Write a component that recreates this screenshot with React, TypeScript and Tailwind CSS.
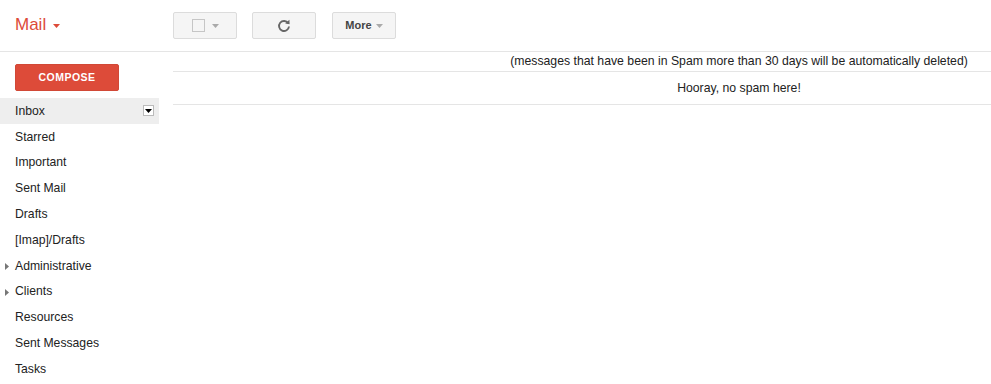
import React from "react";

const labels: { name: string; arrow?: boolean }[] = [
  { name: "Starred" },
  { name: "Important" },
  { name: "Sent Mail" },
  { name: "Drafts" },
  { name: "[Imap]/Drafts" },
  { name: "Administrative", arrow: true },
  { name: "Clients", arrow: true },
  { name: "Resources" },
  { name: "Sent Messages" },
  { name: "Tasks" },
];

function Caret({ color = "#999" }: { color?: string }) {
  return (
    <svg width="7" height="4" viewBox="0 0 7 4" className="shrink-0">
      <path d="M0 0h7L3.5 4z" fill={color} />
    </svg>
  );
}

export default function App() {
  return (
    <div
      className="h-[384px] w-[991px] overflow-hidden bg-white text-[12.2px] text-[#222]"
      style={{ fontFamily: '"Liberation Sans", Arial, sans-serif' }}
    >
      {/* top bar */}
      <div className="flex h-[52px] items-start border-b border-[#e5e5e5]">
        <div className="flex h-[50px] w-[173px] items-center pl-[15px] text-[17px] text-[#dd4b39]">
          <span>Mail</span>
          <span className="ml-[7px] mt-[1px]">
            <Caret color="#dd4b39" />
          </span>
        </div>
        <div className="mt-[12px] flex">
          <button className="flex h-[27px] w-[64px] items-center justify-center gap-[7px] rounded-[2px] border border-[#dcdcdc] bg-[#f5f5f5]">
            <span className="h-[13px] w-[13px] border border-[#c6c6c6] bg-[#f5f5f5]" />
            <Caret color="#aaa" />
          </button>
          <button className="ml-[15px] flex h-[27px] w-[64px] items-center justify-center rounded-[2px] border border-[#dcdcdc] bg-[#f5f5f5]">
            <svg width="14" height="14" viewBox="0 0 14 14">
              <path
                d="M11.2 4.2A5 5 0 1 0 12 7.5"
                fill="none"
                stroke="#666"
                strokeWidth="1.9"
              />
              <path d="M8.2 4.6L12.6 5.2L12.4 0.8z" fill="#666" />
            </svg>
          </button>
          <button className="ml-[16px] flex h-[27px] w-[64px] items-center justify-center gap-[4px] rounded-[2px] border border-[#dcdcdc] bg-[#f5f5f5] text-[11px] font-bold text-[#444]">
            <span>More</span>
            <Caret color="#aaa" />
          </button>
        </div>
      </div>

      <div className="flex">
        {/* sidebar */}
        <div className="w-[173px] shrink-0">
          <div className="pl-[15px] pt-[12px]">
            <button className="flex h-[27px] w-[104px] items-center justify-center rounded-[2px] border border-[#d14836] bg-[#dd4b39] text-[10.5px] font-bold tracking-[0.5px] text-white">
              COMPOSE
            </button>
          </div>
          <div className="mt-[7px]">
            <div className="flex h-[25.8px] w-[159px] items-center justify-between bg-[#eeeeee] pl-[15px] pr-[5px]">
              <span>Inbox</span>
              <span className="flex h-[11px] w-[11px] items-center justify-center border border-[#bbb] bg-white">
                <Caret color="#000" />
              </span>
            </div>
            {labels.map((l) => (
              <div key={l.name} className="relative flex h-[25.8px] items-center pl-[15px]">
                {l.arrow && (
                  <svg width="4" height="7" viewBox="0 0 4 7" className="absolute left-[5px] top-[10px]">
                    <path d="M0 0L4 3.5L0 7z" fill="#777" />
                  </svg>
                )}
                <span>{l.name}</span>
              </div>
            ))}
          </div>
        </div>

        {/* main */}
        <div className="flex-1 text-[12.25px] text-[#222]">
          <div className="flex h-[20px] items-center border-b border-[#e5e5e5] pl-[314px]">
            <span className="w-[504px] text-center">
              (messages that have been in Spam more than 30 days will be automatically deleted)
            </span>
          </div>
          <div className="flex h-[33px] items-center border-b border-[#e5e5e5] pl-[314px]">
            <span className="w-[504px] text-center">Hooray, no spam here!</span>
          </div>
        </div>
      </div>
    </div>
  );
}
